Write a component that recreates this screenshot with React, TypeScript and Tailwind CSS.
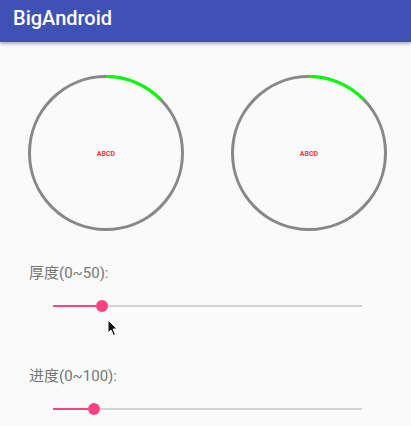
import React from "react";

const Ring = ({ progress }: { progress: number }) => {
  const r = 76.5;
  const c = 2 * Math.PI * r;
  return (
    <div className="relative w-[160px] h-[160px]">
      <svg width="160" height="160" viewBox="0 0 160 160">
        <circle cx="80" cy="80" r={r} fill="none" stroke="#888888" strokeWidth="3" />
        <circle
          cx="80"
          cy="80"
          r={r}
          fill="none"
          stroke="#00ff00"
          strokeWidth="3"
          strokeDasharray={`${c * progress} ${c}`}
          transform="rotate(-90 80 80)"
        />
      </svg>
      <div className="absolute inset-0 flex items-center justify-center">
        <span className="text-[7px] font-semibold text-[#ff2a2a] mt-[2px]">ABCD</span>
      </div>
    </div>
  );
};

const Slider = ({ label, active }: { label: string; active: number }) => (
  <div className="flex flex-col">
    <div className="pl-[29px] text-[15px] leading-[20px] text-[#757575]">{label}</div>
    <div className="flex items-center ml-[53px] w-[309px] h-[20px] mt-[13px]">
      <div className="h-[2px] bg-[#ff4081]" style={{ width: active }} />
      <div className="w-[12px] h-[12px] rounded-full bg-[#ff4081] shrink-0" />
      <div className="h-[2px] flex-1 bg-[#d2d2d2]" />
    </div>
  </div>
);

const App = () => {
  return (
    <div
      className="relative w-[411px] h-[426px] bg-[#fafafa] overflow-hidden"
      style={{ fontFamily: 'Roboto, "Noto Sans CJK SC", sans-serif' }}
    >
      <div className="h-[42px] bg-[#3f51b5] shadow-[0_2px_3px_rgba(0,0,0,0.3)] flex items-center pl-[13px]">
        <span className="text-white text-[20px] font-medium -mt-[7px]">BigAndroid</span>
      </div>
      <div className="flex pl-[26px] gap-[43px] mt-[31px]">
        <Ring progress={0.127} />
        <Ring progress={0.127} />
      </div>
      <div className="mt-[30px]">
        <Slider label="厚度(0~50):" active={43} />
      </div>
      <div className="mt-[50px]">
        <Slider label="进度(0~100):" active={35} />
      </div>
      <svg
        className="absolute left-[107px] top-[319px]"
        width="12"
        height="18"
        viewBox="0 0 12 18"
      >
        <path
          d="M1 1 L1 14 L4 11 L6.5 16.5 L8.5 15.5 L6 10 L10 10 Z"
          fill="#111"
          stroke="#fff"
          strokeWidth="1"
          strokeLinejoin="round"
        />
      </svg>
    </div>
  );
};

export default App;
